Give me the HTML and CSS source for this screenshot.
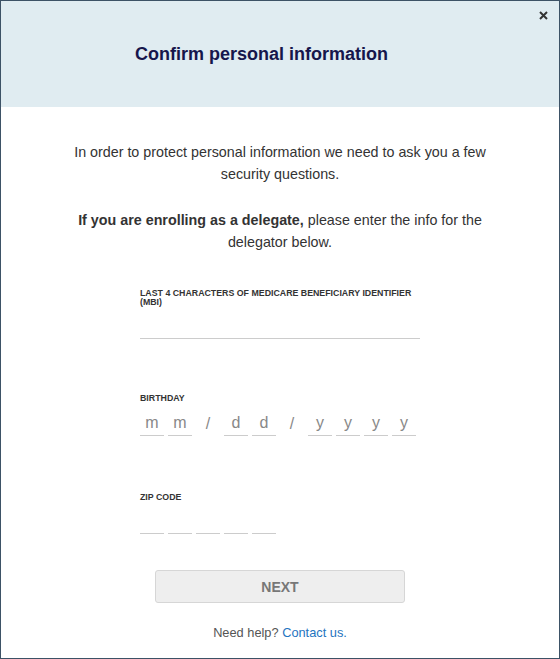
FILE: index.html
```html
<!DOCTYPE html>
<html lang="en">
<head>
    <meta charset="UTF-8">
    <meta name="viewport" content="width=device-width, initial-scale=1.0">
    <title>Confirm personal information</title>
    <link rel="stylesheet" href="styles.css">
</head>
<body>
    <div class="modal">
        <div class="modal-header">
            <h1>Confirm personal information</h1>
            <button class="close" type="button" aria-label="Close">
                <svg width="9" height="9" viewBox="0 0 9 9">
                    <path d="M1 1 L8 8 M8 1 L1 8" stroke="#333" stroke-width="2" fill="none"/>
                </svg>
            </button>
        </div>
        <div class="modal-body">
            <p>In order to protect personal information we need to ask you a few security questions.</p>
            <p><b>If you are enrolling as a delegate,</b> please enter the info for the delegator below.</p>

            <form class="fields">
                <div class="field field-mbi">
                    <label for="mbi">Last 4 characters of Medicare Beneficiary Identifier (MBI)</label>
                    <input type="text" id="mbi" class="line-input">
                </div>

                <div class="field field-birthday">
                    <label>Birthday</label>
                    <div class="boxes">
                        <input class="box" type="text" maxlength="1" placeholder="m">
                        <input class="box" type="text" maxlength="1" placeholder="m">
                        <span class="slash">/</span>
                        <input class="box" type="text" maxlength="1" placeholder="d">
                        <input class="box" type="text" maxlength="1" placeholder="d">
                        <span class="slash">/</span>
                        <input class="box" type="text" maxlength="1" placeholder="y">
                        <input class="box" type="text" maxlength="1" placeholder="y">
                        <input class="box" type="text" maxlength="1" placeholder="y">
                        <input class="box" type="text" maxlength="1" placeholder="y">
                    </div>
                </div>

                <div class="field field-zip">
                    <label>Zip code</label>
                    <div class="boxes">
                        <input class="box" type="text" maxlength="1">
                        <input class="box" type="text" maxlength="1">
                        <input class="box" type="text" maxlength="1">
                        <input class="box" type="text" maxlength="1">
                        <input class="box" type="text" maxlength="1">
                    </div>
                </div>

                <button type="submit" class="next" disabled>NEXT</button>
            </form>

            <div class="help">Need help? <a href="#">Contact us.</a></div>
        </div>
    </div>
</body>
</html>
```

FILE: styles.css
```css
* {
    box-sizing: border-box;
}
body {
    margin: 0;
    font-family: "Liberation Sans", Arial, sans-serif;
    color: #333;
    background: white;
}
.modal {
    width: 560px;
    height: 659px;
    border: 1px solid #3d5266;
    background-color: white;
}
.modal-header {
    position: relative;
    height: 106px;
    background-color: #e0ecf1;
    display: flex;
    justify-content: center;
    align-items: center;
}
h1 {
    margin: 0 37px 0 0;
    font-size: 18px;
    font-weight: bold;
    color: #16164c;
}
.close {
    position: absolute;
    top: 7px;
    right: 9px;
    width: 14px;
    height: 14px;
    padding: 0;
    border: none;
    background: none;
    display: flex;
    align-items: center;
    justify-content: center;
    cursor: pointer;
}
.modal-body {
    padding: 34px 56px 0;
    text-align: center;
}
.modal-body p {
    margin: 0 0 24px;
    font-size: 14.3px;
    line-height: 22px;
}
.modal-body p:nth-of-type(2) {
    margin-bottom: 0;
}
.fields {
    width: 280px;
    margin: 36px auto 0;
    text-align: left;
}
label {
    display: block;
    font-size: 8.8px;
    line-height: 9px;
    font-weight: bold;
    text-transform: uppercase;
    color: #333;
}
.line-input {
    display: block;
    width: 100%;
    height: 28px;
    margin-top: 4px;
    border: none;
    border-bottom: 1px solid #ccc;
    outline: none;
    font-family: inherit;
    font-size: 16px;
}
.field-birthday {
    margin-top: 55px;
}
.field-zip {
    margin-top: 55px;
}
.boxes {
    display: flex;
    gap: 4px;
    margin-top: 4px;
}
.box {
    width: 24px;
    height: 29px;
    padding: 3px 0 0;
    border: none;
    border-bottom: 1px solid #ccc;
    outline: none;
    text-align: center;
    font-family: inherit;
    font-size: 16px;
    color: #555;
}
.field-zip .box {
    height: 28px;
}
.box::placeholder {
    color: #888;
}
.slash {
    width: 24px;
    text-align: center;
    font-size: 16px;
    line-height: 29px;
    padding-top: 2px;
    color: #888;
}
.next {
    display: block;
    width: 250px;
    height: 33px;
    margin: 36px auto 0;
    background-color: #eee;
    border: 1px solid #d6d6d6;
    border-radius: 3px;
    font-family: inherit;
    font-size: 14px;
    font-weight: bold;
    color: #777;
}
.help {
    margin-top: 22px;
    font-size: 12.8px;
    line-height: 16px;
    color: #555;
}
.help a {
    color: #1f74c0;
    text-decoration: none;
}
```
